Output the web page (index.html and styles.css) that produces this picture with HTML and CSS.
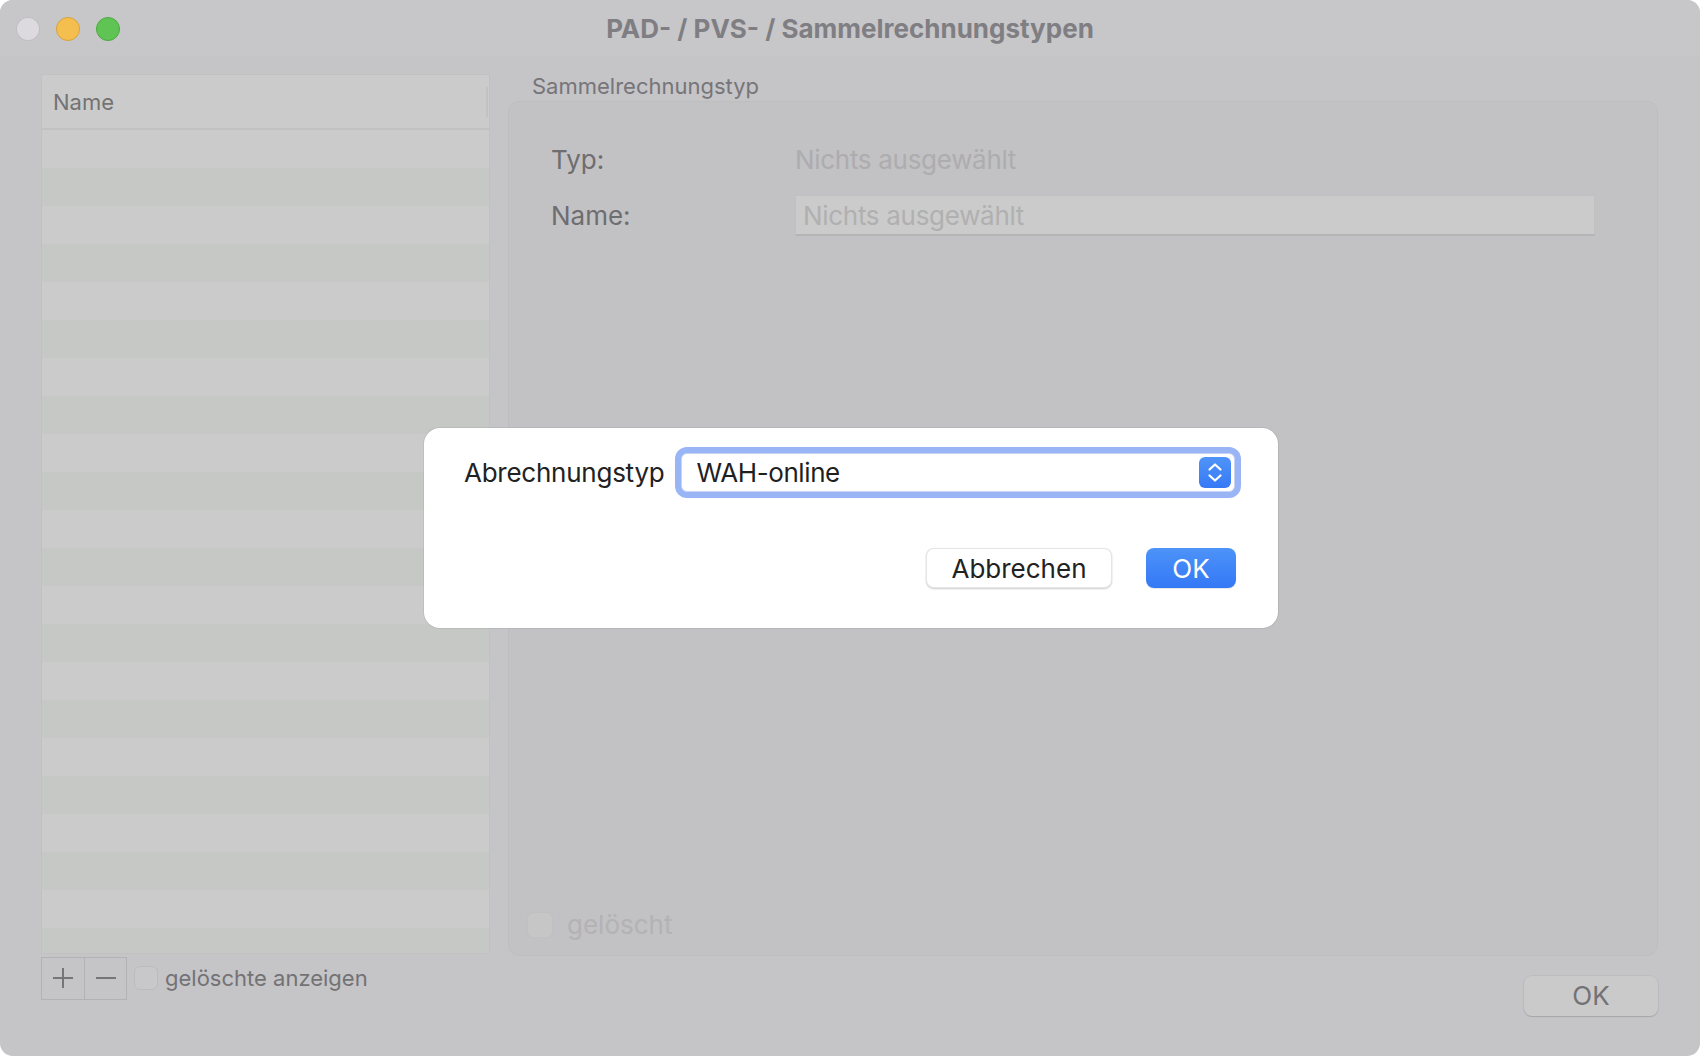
FILE: index.html
```html
<!DOCTYPE html>
<html lang="de">
  <head>
    <meta charset="UTF-8" />
    <title>PAD- / PVS- / Sammelrechnungstypen</title>
    <link rel="stylesheet" href="styles.css">
  </head>
  <body>
    <div class="window">
      <div class="titlebar">
        <div class="lights">
          <span class="light close"></span>
          <span class="light min"></span>
          <span class="light max"></span>
        </div>
        <div class="title">PAD- / PVS- / Sammelrechnungstypen</div>
      </div>

      <div class="content">
        <div class="sidebar">
          <div class="table">
            <div class="table-head"><span>Name</span><span class="col-sep"></span></div>
            <div class="table-body"></div>
          </div>
          <div class="toolbar">
            <div class="seg">
              <button class="seg-btn">
                <svg width="22" height="22" viewBox="0 0 22 22"><path d="M11 1v20M1 11h20" stroke="#767578" stroke-width="2" fill="none"/></svg>
              </button>
              <button class="seg-btn">
                <svg width="22" height="22" viewBox="0 0 22 22"><path d="M1 11h20" stroke="#767578" stroke-width="2" fill="none"/></svg>
              </button>
            </div>
            <label class="check"><span class="box"></span>gelöschte anzeigen</label>
          </div>
        </div>

        <div class="detail">
          <div class="group-label">Sammelrechnungstyp</div>
          <div class="group">
            <div class="form">
              <div class="form-row">
                <span class="form-label">Typ:</span>
                <span class="form-value">Nichts ausgewählt</span>
              </div>
              <div class="form-row">
                <span class="form-label">Name:</span>
                <div class="field">Nichts ausgewählt</div>
              </div>
            </div>
            <label class="check disabled"><span class="box"></span>gelöscht</label>
          </div>
          <div class="footer">
            <button class="btn-dim">OK</button>
          </div>
        </div>
      </div>

      <div class="sheet">
        <div class="sheet-row">
          <span class="sheet-label">Abrechnungstyp</span>
          <div class="popup">
            <span class="popup-text">WAH-online</span>
            <span class="stepper">
              <svg width="32" height="31" viewBox="0 0 32 31">
                <path d="M10.5 12.5L16 7.5l5.5 5M10.5 18.5L16 23.5l5.5-5" stroke="#fff" stroke-width="2.2" fill="none" stroke-linecap="round" stroke-linejoin="round"/>
              </svg>
            </span>
          </div>
        </div>
        <div class="sheet-buttons">
          <button class="btn">Abbrechen</button>
          <button class="btn btn-primary">OK</button>
        </div>
      </div>
    </div>
  </body>
</html>
```

FILE: styles.css
```css
* {
    box-sizing: border-box;
}

body {
    margin: 0;
    background: #ffffff;
    font-family: Inter, "Liberation Sans", sans-serif;
}

.window {
    position: relative;
    width: 1700px;
    height: 1056px;
    background: #c5c4c7;
    border-radius: 13px;
    overflow: hidden;
}

.titlebar {
    display: grid;
    grid-template-columns: 1fr auto 1fr;
    align-items: center;
    height: 56px;
    background: #c7c6c9;
}

.lights {
    display: flex;
    gap: 16px;
    padding-left: 16px;
    padding-top: 2px;
}

.light {
    width: 24px;
    height: 24px;
    border-radius: 50%;
    border: 1px solid rgba(0, 0, 0, 0.12);
}

.light.close {
    background: #dcd9df;
}

.light.min {
    background: #f5bf4f;
    border-color: #d9a23c;
}

.light.max {
    background: #5fc453;
    border-color: #4aa93f;
}

.title {
    font-size: 26px;
    font-weight: 700;
    color: #7f7e82;
    padding-top: 1px;
}

.content {
    display: flex;
    gap: 18px;
    padding: 18px 42px 0 41px;
}

.sidebar {
    width: 449px;
}

.table {
    height: 880px;
    border: 1px solid #c1c1c2;
    display: flex;
    flex-direction: column;
    overflow: hidden;
}

.table-head {
    display: flex;
    justify-content: space-between;
    align-items: center;
    height: 55px;
    padding-left: 11px;
    padding-right: 1px;
    background: #cbcbcb;
    border-bottom: 2px solid #c1c1c1;
    font-size: 22px;
    color: #737373;
}

.col-sep {
    width: 2px;
    height: 30px;
    background: #c2c2c2;
}

.table-body {
    flex: 1;
    background: repeating-linear-gradient(#cbcbcb 0 38px, #c6c8c6 38px 76px);
}

.toolbar {
    display: flex;
    align-items: center;
    margin-top: 3px;
    height: 42px;
}

.seg {
    display: flex;
    border: 1px solid #b2b1b4;
}

.seg-btn {
    width: 42px;
    height: 41px;
    display: flex;
    align-items: center;
    justify-content: center;
    padding: 0;
    border: none;
    background: transparent;
}

.seg-btn + .seg-btn {
    border-left: 1px solid #b2b1b4;
}

.check {
    display: flex;
    align-items: center;
    gap: 7px;
    font-size: 22px;
    color: #737275;
}

.toolbar .check {
    margin-left: 7px;
}

.box {
    width: 24px;
    height: 24px;
    border-radius: 6px;
    background: #c8c7ca;
    border: 1px solid #bcbbbe;
}

.detail {
    flex: 1;
    display: flex;
    flex-direction: column;
}

.group-label {
    height: 24px;
    line-height: 24px;
    padding-left: 24px;
    margin-bottom: 3px;
    font-size: 22px;
    color: #767579;
}

.group {
    height: 855px;
    display: flex;
    flex-direction: column;
    justify-content: space-between;
    background: #c2c1c4;
    border: 1px solid #bebdc0;
    border-radius: 11px;
}

.form {
    display: flex;
    flex-direction: column;
    gap: 15px;
    padding: 37px 62px 0 42px;
}

.form-row {
    display: flex;
    align-items: center;
    height: 41px;
}

.form-label {
    width: 244px;
    font-size: 26px;
    color: #6e6d70;
}

.form-value {
    font-size: 26px;
    letter-spacing: -0.3px;
    color: #adacaf;
}

.field {
    flex: 1;
    height: 41px;
    line-height: 39px;
    padding-left: 7px;
    background: #cbcbcb;
    border: 1px solid #c0c0c0;
    border-bottom: 2px solid #b5b5b6;
    font-size: 26px;
    letter-spacing: -0.3px;
    color: #b0b0b0;
}

.group .check {
    margin: 0 0 15px 18px;
    gap: 14px;
    font-size: 26px;
    color: #b3b2b5;
}

.group .box {
    width: 26px;
    height: 26px;
    background: #c6c6c7;
    border-color: #c0bfc2;
}

.footer {
    display: flex;
    justify-content: flex-end;
    margin-top: 20px;
}

.btn-dim {
    width: 134px;
    height: 40px;
    padding-bottom: 2px;
    border: none;
    border-radius: 8px;
    background: #cacacb;
    box-shadow: 0 1px 1px rgba(0, 0, 0, 0.12), 0 0 0 1px rgba(0, 0, 0, 0.04);
    font-family: inherit;
    font-size: 26px;
    color: #737275;
}

.sheet {
    position: absolute;
    left: 424px;
    top: 428px;
    width: 854px;
    height: 200px;
    padding: 25px 42px 0 40px;
    background: #ffffff;
    border-radius: 16px;
    box-shadow: 0 0 0 1px rgba(0, 0, 0, 0.06);
}

.sheet-row {
    display: flex;
    align-items: center;
}

.sheet-label {
    font-size: 26px;
    letter-spacing: -0.25px;
    color: #222222;
}

.popup {
    flex: 1;
    display: flex;
    align-items: center;
    justify-content: space-between;
    height: 39px;
    margin-left: 17px;
    margin-right: 1px;
    padding: 0 3px 0 14px;
    background: #ffffff;
    border: 1px solid #c6d3f2;
    border-radius: 6px;
    box-shadow: 0 0 0 6px #99b5f5;
}

.popup-text {
    font-size: 26px;
    letter-spacing: -0.4px;
    color: #1f1f1f;
}

.stepper {
    display: flex;
    width: 32px;
    height: 31px;
    border-radius: 6px;
    background: linear-gradient(#4f94f8, #3679f6);
}

.sheet-buttons {
    display: flex;
    justify-content: flex-end;
    gap: 34px;
    margin-top: 56px;
}

.btn {
    height: 40px;
    width: 186px;
    border: 1px solid rgba(0, 0, 0, 0.1);
    border-radius: 8px;
    background: #ffffff;
    box-shadow: 0 1px 2px rgba(0, 0, 0, 0.2);
    font-family: inherit;
    font-size: 26px;
    color: #222222;
}

.btn-primary {
    width: 90px;
    border: none;
    background: linear-gradient(#4d93f8, #3478f6);
    box-shadow: 0 1px 1px rgba(0, 0, 0, 0.1);
    color: #ffffff;
}
```
